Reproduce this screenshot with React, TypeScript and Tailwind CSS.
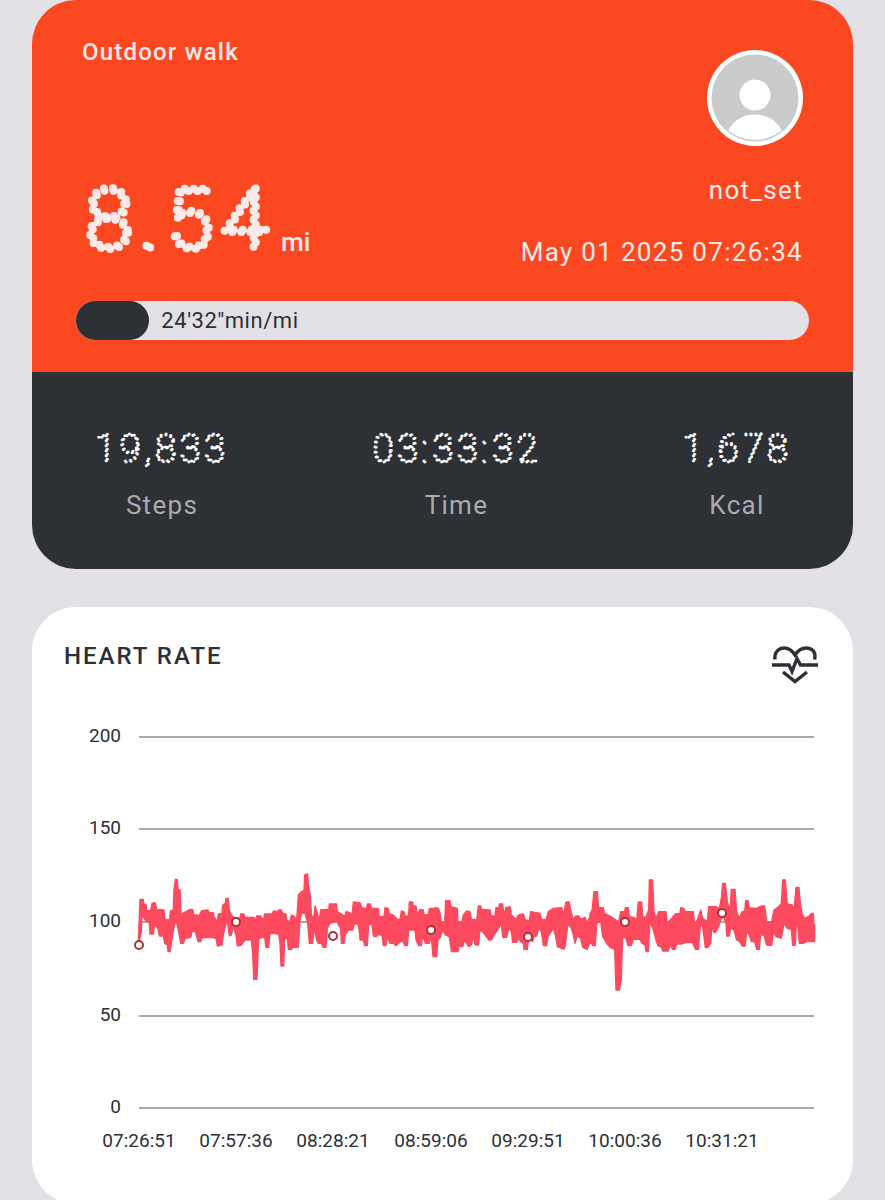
import { ReactNode } from "react";

// Outline of the heart rate band, three consecutive stretches of the walk
const BAND = [
  {
    offset: 0,
    upper:
      "25,240 30,118 40,118 42,133 48,133 50,152 62,152 66,130 75,127 80,148 102,150 105,178 118,180 122,152 130,150 132,88 136,58 142,58 144,88 150,90 153,162 165,156 180,148 188,148 192,165 203,165 206,180 208,165 215,152 234,150 238,158 250,158 252,170 262,185 265,162 276,160 278,135 286,130 288,115 295,115 298,150 304,165 312,172 330,175 332,162 342,162 344,172 372,172 376,182 380,168 392,168 400,182 404,162 427,162 430,153 442,155 446,150 454,150 458,160 468,162 470,180 480,185 484,165 492,168 500,180 505,105 514,95 522,92 524,45 533,42 535,75 540,100 545,170 552,168 555,138 560,152 568,180 572,150 590,148 596,150 598,132 620,132 622,155 645,168 648,155 660,158 666,165 670,126 688,128 692,130",
    lower:
      "25,255 34,215 36,165 45,180 58,190 60,222 70,222 74,195 84,205 88,228 100,228 104,250 112,255 114,275 120,275 124,250 130,210 138,180 146,215 152,250 160,250 166,235 182,233 186,215 196,215 204,245 212,245 216,233 240,232 258,235 262,258 276,255 280,225 286,200 292,180 298,228 304,225 310,200 318,225 322,258 335,255 345,240 364,240 368,280 371,358 381,358 386,235 404,232 408,262 416,262 420,220 446,222 450,250 453,318 461,318 464,235 472,235 475,268 485,268 488,262 505,262 510,180 515,160 525,160 533,190 538,250 548,250 552,205 560,240 565,250 574,250 580,262 588,262 592,205 600,190 620,185 632,205 634,250 642,250 646,225 655,210 668,210 674,190 685,195 692,240",
  },
  {
    offset: 690,
    upper:
      "0,130 5,143 20,145 22,132 32,132 34,145 55,145 58,170 72,170 75,143 85,145 88,160 100,165 112,178 120,178 124,153 132,155 136,170 146,165 148,126 158,126 160,138 168,138 172,165 180,148 190,150 192,165 205,163 208,145 222,145 226,143 236,145 240,160 244,185 254,185 257,122 270,122 273,140 292,145 294,185 306,185 310,165 320,153 330,155 335,180 342,178 350,180 355,138 362,138 365,148 390,150 394,168 405,168 408,143 416,143 418,132 428,132 432,165 438,142 450,140 454,165 468,178 475,165 490,162 496,180 508,182 512,155 540,160 545,178 558,178 565,155 580,145 605,143 610,165 618,126 628,126 632,150 640,180 646,168 656,168 662,178 675,172 682,188 692,165",
    lower:
      "0,240 10,240 14,257 22,257 26,195 36,192 40,228 50,230 56,222 66,228 70,257 78,257 82,230 90,250 100,250 108,257 116,250 128,240 134,257 142,257 146,210 165,210 168,240 176,257 184,257 188,225 196,250 208,250 214,230 219,290 230,290 234,240 240,235 248,210 256,225 268,230 274,275 294,275 298,258 308,260 314,240 326,260 334,255 340,230 346,255 356,255 360,210 372,220 386,240 394,240 404,222 416,205 424,190 428,232 440,232 446,205 454,215 458,247 470,247 475,235 482,245 490,250 492,268 502,268 506,235 518,245 522,230 530,228 536,205 544,215 550,257 560,257 564,230 580,205 586,225 592,260 612,268 616,258 624,190 634,205 640,225 645,250 652,228 662,235 668,262 682,268 686,255 692,250",
  },
  {
    offset: 1380,
    upper:
      "0,160 6,152 12,95 22,95 26,143 40,143 44,160 60,168 78,180 86,185 92,155 104,155 106,143 115,143 118,170 132,172 140,180 145,126 155,126 158,170 168,172 176,150 178,60 188,60 192,155 198,175 206,155 228,155 232,190 242,178 256,162 270,160 272,143 282,145 285,155 310,155 314,190 322,180 332,150 338,175 352,185 356,140 378,140 388,145 394,115 398,70 406,70 412,125 420,150 424,88 435,88 440,155 448,175 456,155 464,155 467,122 474,122 477,143 500,145 514,138 524,138 530,185 545,185 552,150 562,143 574,130 578,60 586,60 592,132 606,135 612,150 618,82 627,82 630,120 636,160 644,175 658,168 664,160 670,160 672,195 674,195",
    lower:
      "0,235 8,257 16,257 20,190 32,185 38,230 50,250 60,262 74,268 78,390 88,390 94,358 98,232 108,235 114,257 124,257 130,238 150,238 156,250 165,255 168,275 175,275 180,185 190,210 198,240 204,257 214,262 218,273 235,273 240,255 248,268 256,268 260,252 276,252 286,248 308,248 316,268 326,268 330,205 336,190 342,230 346,263 354,262 362,250 366,190 370,215 376,218 384,205 392,180 400,170 408,190 410,228 418,228 422,205 432,210 440,240 450,245 456,258 466,258 470,215 478,225 484,245 494,245 500,268 508,268 512,225 522,225 530,255 545,257 550,215 558,230 574,235 582,190 592,205 604,208 608,257 616,255 620,165 628,250 640,250 650,245 664,245 674,245",
  },
];

const GRID = [
  { value: 200, y: 17 },
  { value: 150, y: 109 },
  { value: 100, y: 202 },
  { value: 50, y: 296 },
  { value: 0, y: 388 },
];

const TICKS = [
  { time: "07:26:51", x: 75, y: 225 },
  { time: "07:57:36", x: 172, y: 202 },
  { time: "08:28:21", x: 269, y: 216 },
  { time: "08:59:06", x: 367, y: 210 },
  { time: "09:29:51", x: 464, y: 217 },
  { time: "10:00:36", x: 561, y: 202 },
  { time: "10:31:21", x: 658, y: 193 },
];

const App = () => {
  return (
    <main className="min-h-screen bg-[#e3e0e6] px-8 font-['Roboto',sans-serif] text-[#2d3035]">
      {/* Workout summary */}
      <section>
        <div className="rounded-t-[44px] bg-[#fc4821] px-11 pb-8 text-[#fbeaea]">
          <div className="flex justify-between px-1.5">
            <div className="flex flex-col justify-between pt-9 pb-1.5">
              <h1 className="text-2xl font-medium tracking-wider">
                Outdoor walk
              </h1>
              <p className="flex items-baseline gap-1">
                <svg className="h-20 w-[195px] overflow-visible">
                  <text
                    x="4"
                    y="77"
                    className="fill-none stroke-[#fbeaea] stroke-8 text-[84px] font-thin tracking-widest [stroke-dasharray:0_9] [stroke-linecap:round]"
                  >
                    8.54
                  </text>
                </svg>
                <span className="text-[26px] font-medium">mi</span>
              </p>
            </div>
            <div className="flex flex-col items-end pt-[50px] text-[26px] leading-8 tracking-wider">
              <Avatar />
              <p className="mt-7">not_set</p>
              <p className="mt-[30px]">May 01 2025 07:26:34</p>
            </div>
          </div>
          <div className="mt-[33px] flex h-[39px] items-center gap-3 rounded-full bg-[#e3e0e6] text-[#2d3035]">
            <div className="h-full w-1/10 rounded-full bg-[#2d3035]" />
            <span className="text-[22px] tracking-wide">24'32"min/mi</span>
          </div>
        </div>

        <div className="flex justify-between rounded-b-[44px] bg-[#2d3035] px-[63px] pt-[52px] pb-12">
          <Stat label="Steps" width="w-[134px]">
            19,833
          </Stat>
          <Stat label="Time" width="w-[182px]">
            03:33:32
          </Stat>
          <Stat label="Kcal" width="w-[106px]">
            1,678
          </Stat>
        </div>
      </section>

      {/* Heart rate */}
      <section className="mt-[38px] rounded-[44px] bg-white px-8 pt-[33px] pb-11">
        <div className="flex items-start justify-between">
          <h2 className="text-2xl font-medium tracking-[2px]">HEART RATE</h2>
          <HeartIcon />
        </div>
        <HeartRateChart />
      </section>
    </main>
  );
};

function Stat({
  label,
  width,
  children,
}: {
  label: string;
  width: string;
  children: ReactNode;
}) {
  return (
    <div className={`flex flex-col items-center ${width}`}>
      <svg className="h-12 w-full overflow-visible">
        <text
          x="50%"
          y="38"
          textAnchor="middle"
          className="fill-none stroke-white stroke-3 text-[38px] font-thin tracking-widest [stroke-dasharray:0_5] [stroke-linecap:round]"
        >
          {children}
        </text>
      </svg>
      <p className="mt-[17px] text-[26px] leading-8 tracking-wider text-[#a9abae]">
        {label}
      </p>
    </div>
  );
}

function Avatar() {
  return (
    <svg className="size-24" viewBox="0 0 96 96" aria-hidden="true">
      <defs>
        <clipPath id="face">
          <circle cx="48" cy="48" r="42" />
        </clipPath>
      </defs>
      <circle cx="48" cy="48" r="48" fill="#fff" />
      <circle cx="48" cy="48" r="43.5" fill="#c9cbcc" />
      <circle cx="48" cy="45" r="15.5" fill="#fff" />
      <path
        d="M17 94C20 74 33 64.500 48 64.500S76 74 79 94Z"
        fill="#fff"
        clipPath="url(#face)"
      />
    </svg>
  );
}

function HeartIcon() {
  return (
    <svg
      className="mt-1 mr-0.5 h-10 w-12"
      viewBox="0 0 48 40"
      fill="none"
      stroke="#2d3035"
      strokeWidth="3.4"
      aria-hidden="true"
    >
      <path d="M4 15.500C3 8 8 4 13.500 4C18 4 21 6.500 24 11C27 6.500 30 4 35 4C41 4 45.500 8 43.500 15.500" />
      <path d="M1 21H18L21 27.500L26 14.500L29.500 21H47" />
      <path d="M12 28L24 37.500L36 28" />
    </svg>
  );
}

function HeartRateChart() {
  return (
    <svg
      className="mt-9 w-full"
      viewBox="0 0 757 440"
      role="img"
      aria-label="Heart rate over time"
    >
      {GRID.map(({ value, y }) => (
        <g key={value}>
          <line x1="75" x2="750" y1={y} y2={y} stroke="#a9aaae" strokeWidth="2" />
          <text x="57" y={y + 5} textAnchor="end" fontSize="19" fill="#2d3035">
            {value}
          </text>
        </g>
      ))}

      <g transform="translate(66 140) scale(0.33333)">
        {BAND.map(({ offset, upper, lower }) => (
          <polygon
            key={offset}
            points={`${upper} ${lower.split(" ").reverse().join(" ")}`}
            transform={`translate(${offset} 0)`}
            fill="#fd4a5f"
            stroke="#fd4a5f"
            strokeWidth="4"
            strokeLinejoin="round"
          />
        ))}
      </g>

      {TICKS.map(({ time, x, y }) => (
        <g key={time}>
          <circle cx={x} cy={y} r="4" fill="#fff" stroke="#a5373a" strokeWidth="2" />
          <text x={x} y="427" textAnchor="middle" fontSize="19" fill="#2d3035">
            {time}
          </text>
        </g>
      ))}
    </svg>
  );
}

export default App;
